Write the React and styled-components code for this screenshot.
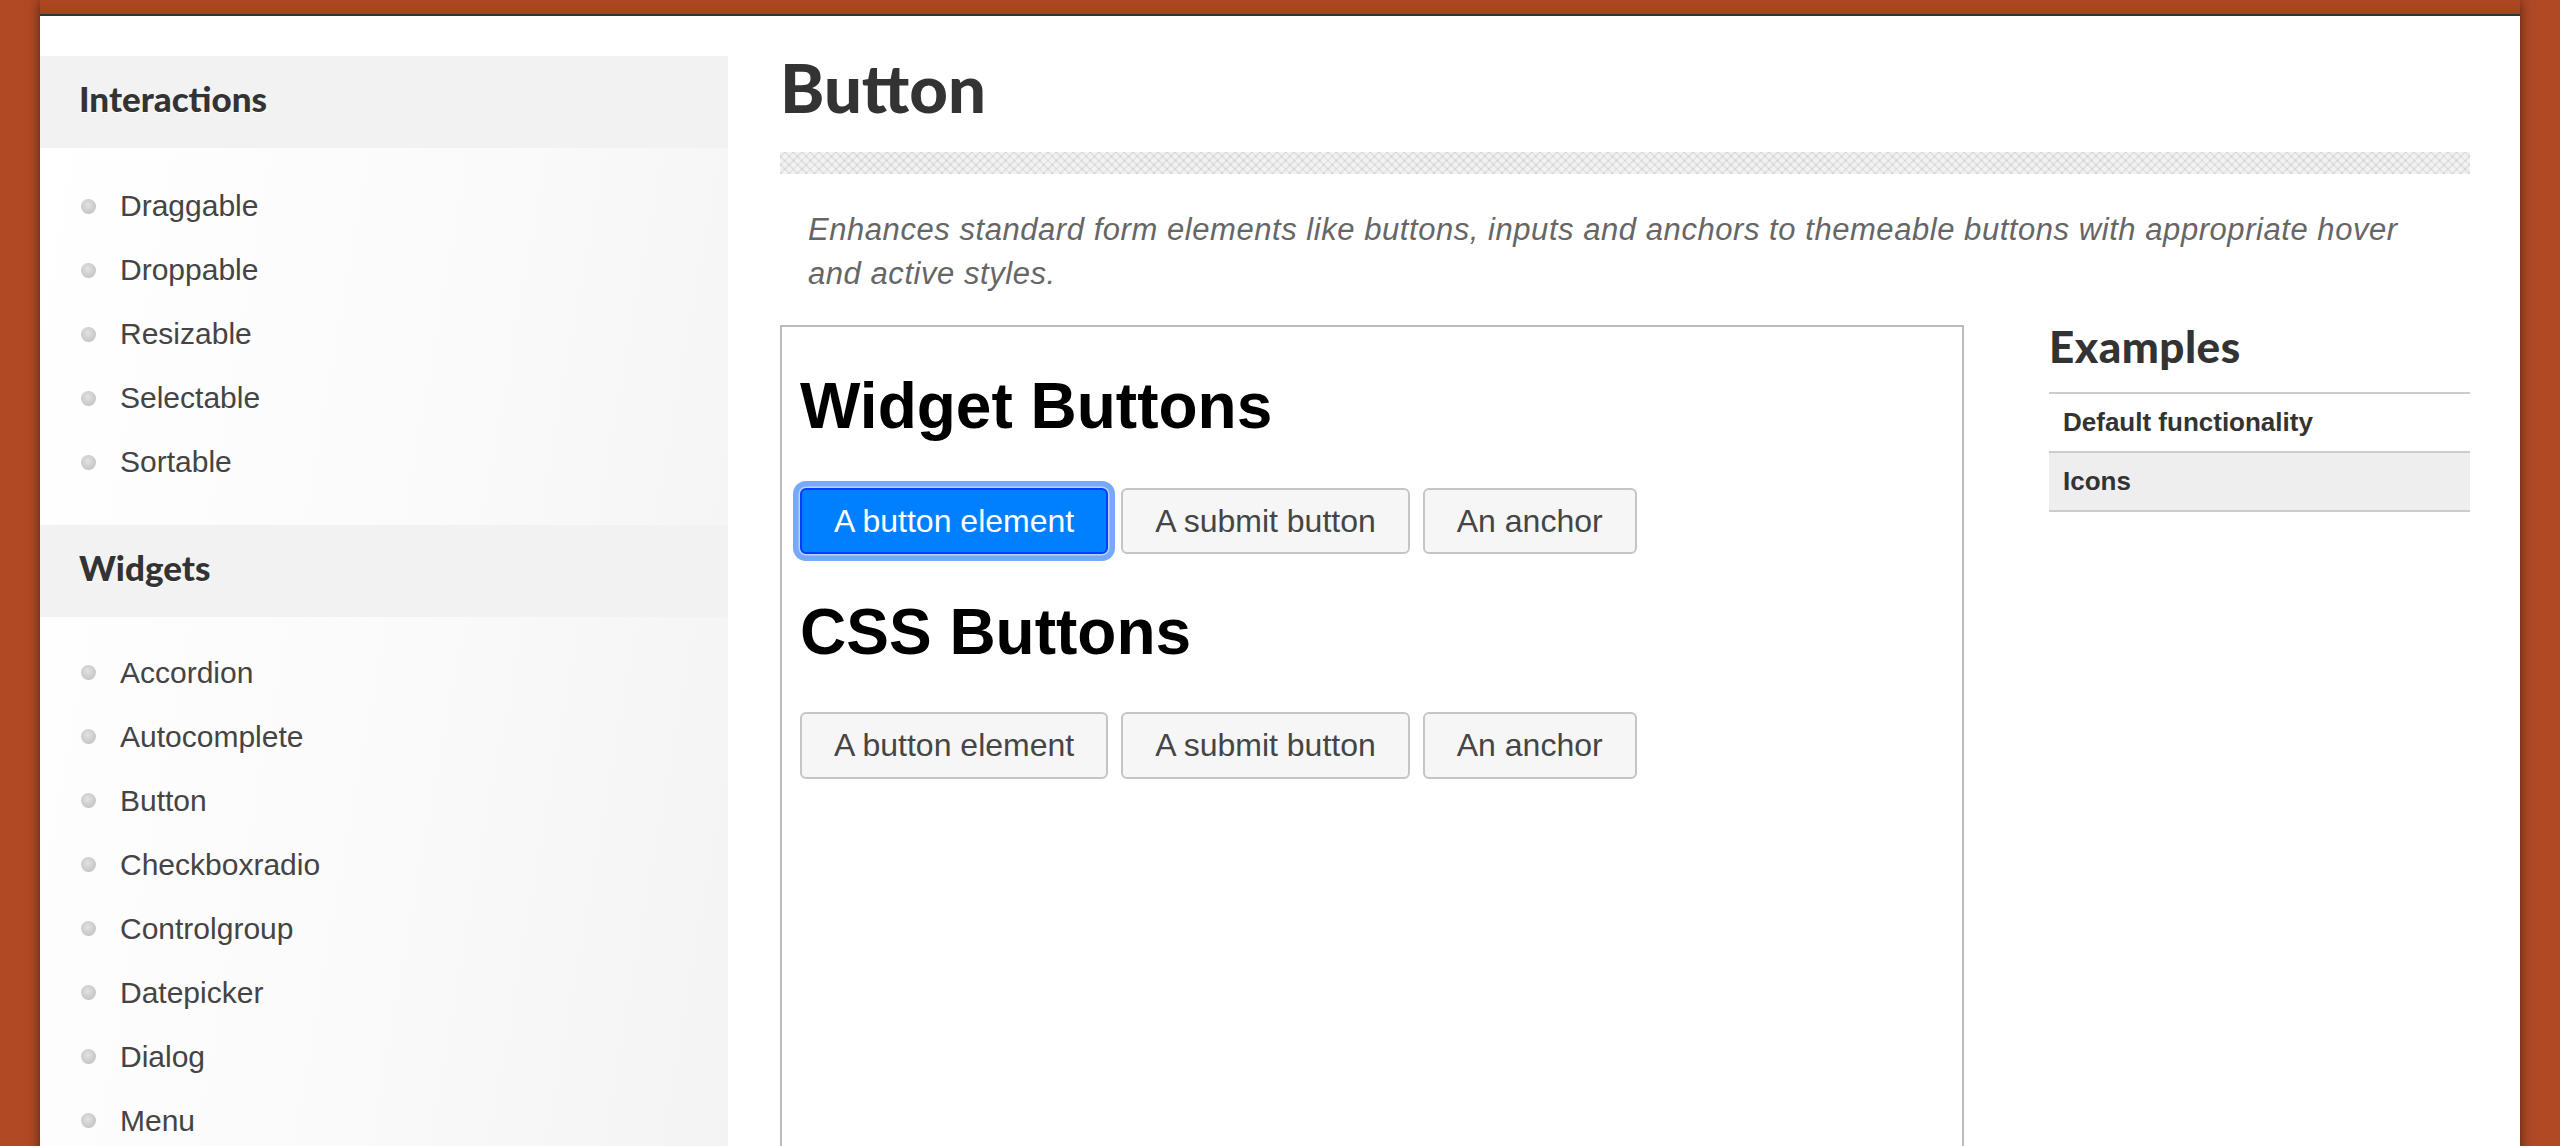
import React from "react";
import styled, { createGlobalStyle } from "styled-components";

const GlobalStyle = createGlobalStyle`
  html, body {
    margin: 0;
    padding: 0;
    height: 100%;
    overflow: hidden;
  }
  body {
    background: #b14925;
    font-family: "Liberation Sans", Arial, sans-serif;
  }
`;

const Page = styled.div`
  padding: 0 40px;
`;

const Container = styled.div`
  width: 2480px;
  background: #fff;
  box-shadow: 0 0 12px rgba(0, 0, 0, 0.55);
  min-height: 1200px;
`;

const TopBar = styled.div`
  height: 14px;
  background: linear-gradient(#ad4724, #a64321);
  border-bottom: 2px solid #333;
`;

const Body = styled.div`
  display: flex;
  align-items: flex-start;
  gap: 52px;
`;

const Sidebar = styled.aside`
  width: 688px;
  flex: none;
  margin-top: 40px;
  min-height: 1200px;
  background: linear-gradient(100deg, #ffffff 0%, #fafafa 55%, #f3f3f3 100%);
`;

const SideHeader = styled.h3`
  margin: 0;
  height: 92px;
  box-sizing: border-box;
  padding: 25px 0 0 39px;
  background: #f2f2f2;
  font-family: Lato, "Open Sans", sans-serif;
  font-weight: 900;
  font-size: 35px;
  line-height: 35px;
  color: #333;
  text-shadow: 0 1px 0 #fff;
`;

const SideList = styled.ul`
  list-style: none;
  margin: 0;
  padding: ${(p) => (p.$tight ? "23.5px" : "26px")} 0 31px;
`;

const SideItem = styled.li`
  display: flex;
  align-items: center;
  height: 64px;
  padding-left: 41px;
  font-size: 30px;
  line-height: 64px;
  color: #444;
  &::before {
    content: "";
    width: 15px;
    height: 15px;
    border-radius: 50%;
    margin-right: 24px;
    background: radial-gradient(circle at 45% 40%, #e2e2e2 0%, #cccccc 55%, #b8b8b8 100%);
    flex: none;
  }
`;

const Main = styled.main`
  width: 1690px;
  flex: none;
  padding-top: 37.6px;
`;

const Title = styled.h1`
  margin: 0;
  font-family: Lato, "Open Sans", sans-serif;
  font-weight: 900;
  font-size: 67px;
  line-height: 67px;
  color: #333;
`;

const Stripe = styled.div`
  height: 22px;
  margin-top: 31px;
  background-color: #f2f2f2;
  background-image:
    repeating-linear-gradient(45deg, rgba(0, 0, 0, 0.06) 0 2px, transparent 2px 6px),
    repeating-linear-gradient(-45deg, rgba(0, 0, 0, 0.06) 0 2px, transparent 2px 6px);
`;

const Desc = styled.p`
  margin: 34px 0 0;
  padding: 0 50px 0 28px;
  font-style: italic;
  font-size: 31px;
  letter-spacing: 0.55px;
  line-height: 44px;
  color: #666;
`;

const ContentRow = styled.div`
  display: flex;
  align-items: flex-start;
  gap: 85px;
  margin-top: 29px;
`;

const DemoFrame = styled.div`
  width: 1184px;
  height: 1000px;
  box-sizing: border-box;
  border: 2px solid #bbb;
  padding: 0 16px 0 18px;
  background: #fff;
  flex: none;
`;

const DemoHeading = styled.h1`
  margin: ${(p) => (p.$second ? "41px" : "42.9px")} 0 42.9px;
  font-family: "Liberation Sans", Arial, sans-serif;
  font-weight: 700;
  font-size: 64px;
  line-height: normal;
  color: #000;
`;

const ButtonRow = styled.div`
  display: flex;
  gap: 13px;
  padding-top: ${(p) => (p.$first ? "1.5px" : "0")};
`;

const UiButton = styled.button`
  font-family: "Liberation Sans", Arial, sans-serif;
  font-size: 32px;
  line-height: normal;
  padding: 12.8px 32px;
  border: 2px solid ${(p) => (p.$active ? "#003eff" : "#c5c5c5")};
  border-radius: 6px;
  background: ${(p) => (p.$active ? "#007fff" : "#f6f6f6")};
  color: ${(p) => (p.$active ? "#fff" : "#454545")};
  box-shadow: ${(p) =>
    p.$active ? "0 0 0 1.5px #b7d2fc, 0 0 0 7px #78a9f8" : "none"};
  cursor: pointer;
`;

const Aside = styled.aside`
  width: 421px;
  flex: none;
`;

const AsideTitle = styled.h2`
  margin: 0 0 24px;
  font-family: Lato, "Open Sans", sans-serif;
  font-weight: 900;
  font-size: 44px;
  line-height: 43px;
  color: #333;
  letter-spacing: 0.5px;
`;

const ExampleList = styled.ul`
  list-style: none;
  margin: 0;
  padding: 0;
  border-top: 2px solid #ccc;
`;

const ExampleItem = styled.li`
  height: 59px;
  box-sizing: border-box;
  display: flex;
  align-items: center;
  padding-left: 14px;
  border-bottom: 2px solid #ccc;
  background: ${(p) => (p.$active ? "#eee" : "transparent")};
  font-size: 26px;
  font-weight: 700;
  color: #333;
`;

const interactions = ["Draggable", "Droppable", "Resizable", "Selectable", "Sortable"];
const widgets = [
  "Accordion",
  "Autocomplete",
  "Button",
  "Checkboxradio",
  "Controlgroup",
  "Datepicker",
  "Dialog",
  "Menu",
];

export default function App() {
  return (
    <>
      <GlobalStyle />
      <Page>
        <Container>
          <TopBar />
          <Body>
            <Sidebar>
              <SideHeader>Interactions</SideHeader>
              <SideList>
                {interactions.map((i) => (
                  <SideItem key={i}>{i}</SideItem>
                ))}
              </SideList>
              <SideHeader>Widgets</SideHeader>
              <SideList $tight>
                {widgets.map((i) => (
                  <SideItem key={i}>{i}</SideItem>
                ))}
              </SideList>
            </Sidebar>
            <Main>
              <Title>Button</Title>
              <Stripe />
              <Desc>
                Enhances standard form elements like buttons, inputs and anchors to themeable
                buttons with appropriate hover and active styles.
              </Desc>
              <ContentRow>
                <DemoFrame>
                  <DemoHeading>Widget Buttons</DemoHeading>
                  <ButtonRow $first>
                    <UiButton $active>A button element</UiButton>
                    <UiButton>A submit button</UiButton>
                    <UiButton>An anchor</UiButton>
                  </ButtonRow>
                  <DemoHeading $second>CSS Buttons</DemoHeading>
                  <ButtonRow>
                    <UiButton>A button element</UiButton>
                    <UiButton>A submit button</UiButton>
                    <UiButton>An anchor</UiButton>
                  </ButtonRow>
                </DemoFrame>
                <Aside>
                  <AsideTitle>Examples</AsideTitle>
                  <ExampleList>
                    <ExampleItem>Default functionality</ExampleItem>
                    <ExampleItem $active>Icons</ExampleItem>
                  </ExampleList>
                </Aside>
              </ContentRow>
            </Main>
          </Body>
        </Container>
      </Page>
    </>
  );
}
